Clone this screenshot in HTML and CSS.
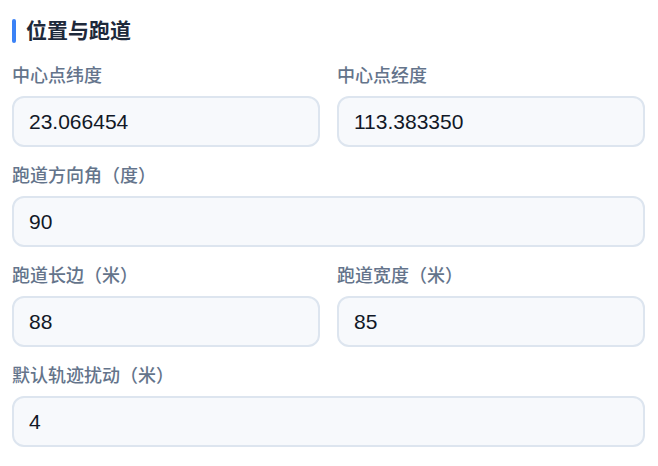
FILE: index.html
```html
<!DOCTYPE html>
<html lang="zh">
<head>
<meta charset="utf-8">
<link rel="stylesheet" href="styles.css">
</head>
<body>
<section class="panel">
  <h2 class="section-title">位置与跑道</h2>
  <div class="row two">
    <div class="field">
      <label class="label">中心点纬度</label>
      <input class="input" value="23.066454">
    </div>
    <div class="field">
      <label class="label">中心点经度</label>
      <input class="input" value="113.383350">
    </div>
  </div>
  <div class="row">
    <div class="field">
      <label class="label">跑道方向角（度）</label>
      <input class="input" value="90">
    </div>
  </div>
  <div class="row two">
    <div class="field">
      <label class="label">跑道长边（米）</label>
      <input class="input" value="88">
    </div>
    <div class="field">
      <label class="label">跑道宽度（米）</label>
      <input class="input" value="85">
    </div>
  </div>
  <div class="row">
    <div class="field">
      <label class="label">默认轨迹扰动（米）</label>
      <input class="input" value="4">
    </div>
  </div>
</section>
</body>
</html>
```
FILE: styles.css
```css
html, body {
  margin: 0;
  padding: 0;
  background: #ffffff;
}
body {
  font-family: "Liberation Sans", "Noto Sans CJK SC", sans-serif;
}
.panel {
  padding: 19px 13px 0 12px;
}
.section-title {
  margin: 0;
  display: flex;
  align-items: center;
  gap: 10px;
  height: 24px;
  font-size: 21px;
  line-height: 24px;
  font-weight: 700;
  color: #1e293b;
}
.section-title::before {
  content: "";
  width: 4px;
  height: 24px;
  border-radius: 2px;
  background: #3b82f6;
}
.row {
  display: grid;
  grid-template-columns: 1fr;
  column-gap: 17px;
  margin-top: 21px;
}
.row + .row {
  margin-top: 17px;
}
.row.two {
  grid-template-columns: 1fr 1fr;
}
.field {
  display: flex;
  flex-direction: column;
}
.label {
  font-size: 18px;
  line-height: 24px;
  color: #64748b;
  font-weight: 500;
  margin-bottom: 8px;
}
.input {
  box-sizing: border-box;
  height: 51px;
  width: 100%;
  border: 2px solid #dde5ef;
  border-radius: 12px;
  background: #f7f9fc;
  padding: 0 15px;
  font-family: "Liberation Sans", sans-serif;
  font-size: 21px;
  color: #111827;
  outline: none;
}
```
